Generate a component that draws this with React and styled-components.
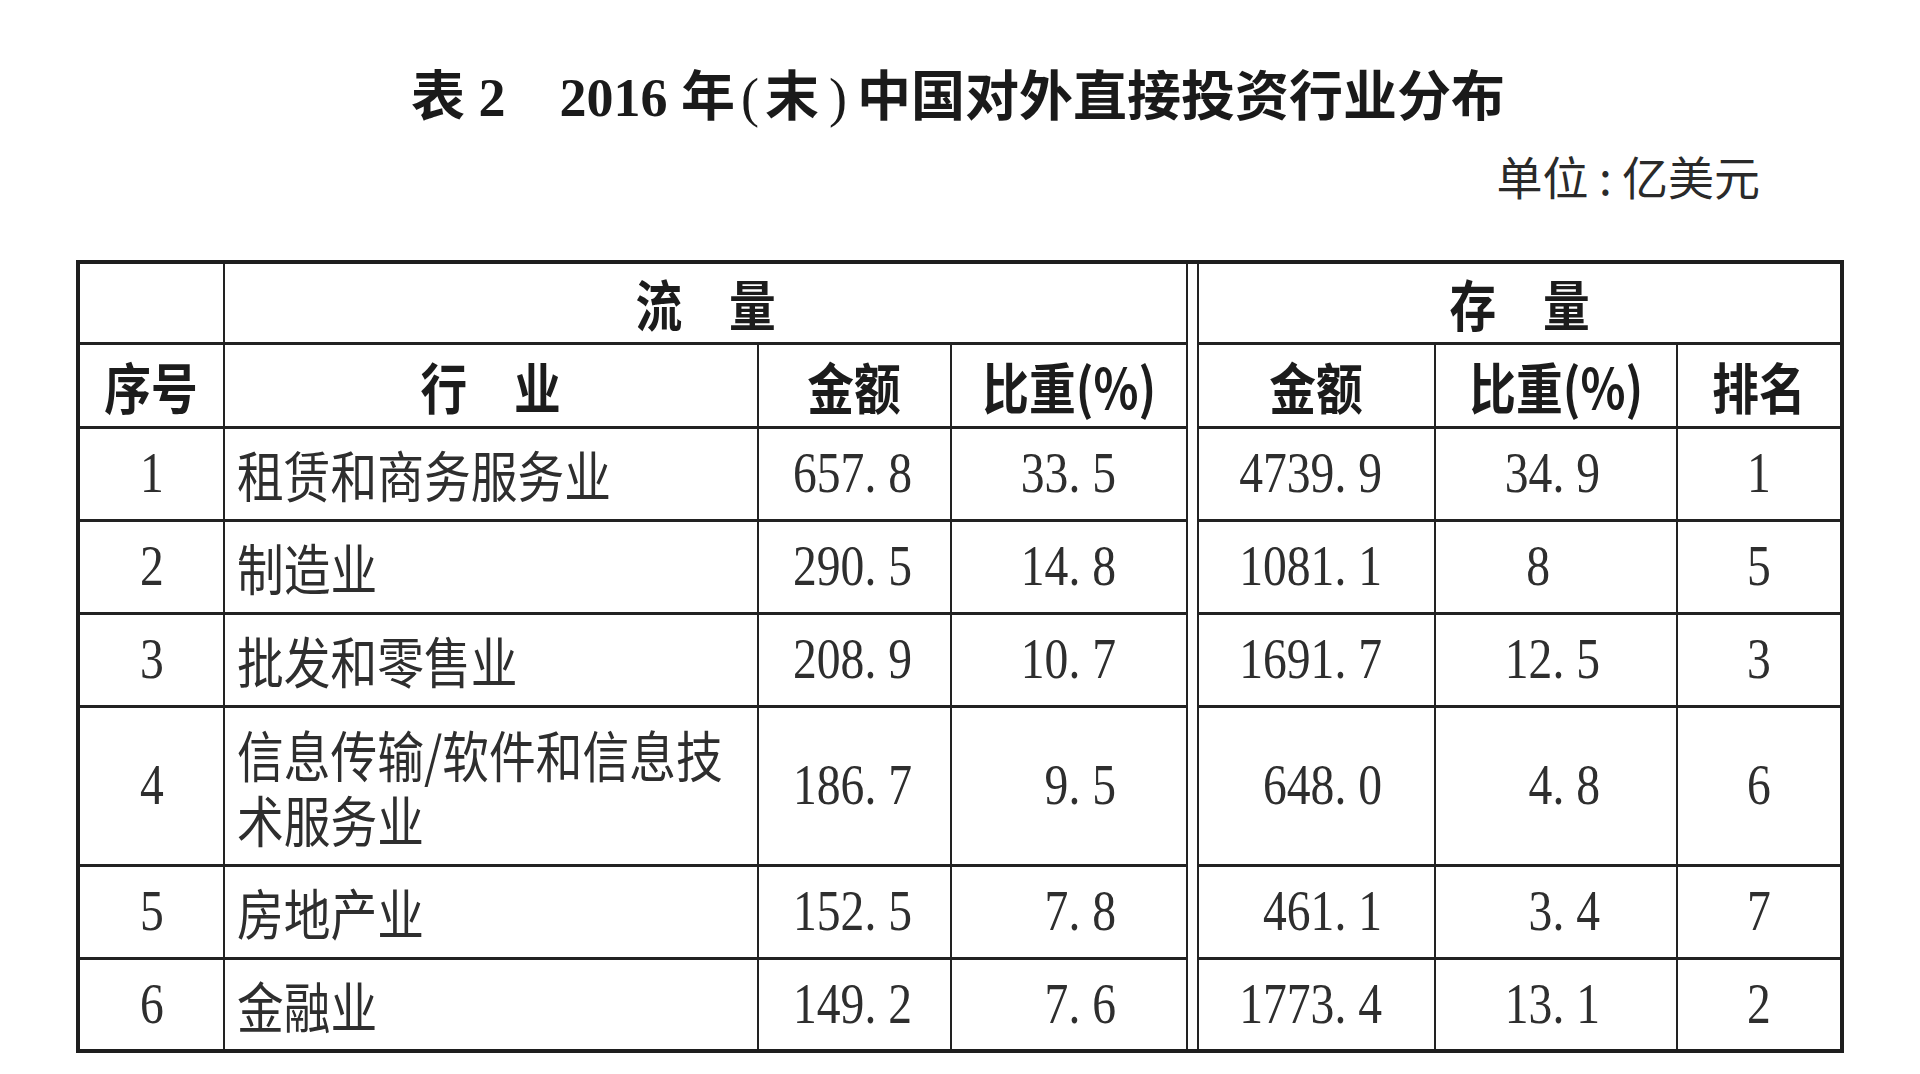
import React from 'react';
import styled, { createGlobalStyle, css } from 'styled-components';

const GlobalStyle = createGlobalStyle`
  html, body { margin: 0; padding: 0; background: #fff; }
  body { font-family: "Noto Sans CJK SC", "Liberation Sans", sans-serif; color: #222; }
`;

// ---------------- layout ----------------
const Page = styled.div`
  width: 1920px;
  height: 1074px;
  box-sizing: border-box;
  padding: 0 80px 0 76px;
  display: flex;
  flex-direction: column;
  overflow: hidden;
`;

const Title = styled.h1`
  margin: 66px 0 0;
  text-align: center;
  font-family: "Liberation Serif", "Noto Sans CJK SC", serif;
  font-weight: 700;
  font-size: 54px;
  line-height: 64px;
  color: #1a1a1a;
  white-space: pre;
`;

const Paren = styled.span`
  font-weight: 400;
  margin: 0 ${p => p.$gap || 0}px;
`;

const Unit = styled.div`
  align-self: flex-end;
  margin: 20px 80px 0 0;
  font-size: 46px;
  line-height: 50px;
  color: #2a2a2a;
  white-space: pre;
`;

const Table = styled.table`
  margin-top: 60px;
  width: 100%;
  table-layout: fixed;
  border-collapse: collapse;
  border: 4px solid #1e1e1e;
`;

const Col = styled.col`
  width: ${p => p.$w}px;
`;

const Row = styled.tr`
  height: ${p => p.$h}px;
`;

const cellBase = css`
  border: solid #222;
  border-width: 3px 2px;
  padding: 0 ${p => p.$pr || 0}px 0 ${p => p.$pl || 0}px;
  text-align: ${p => p.$align || 'center'};
  vertical-align: middle;
  font-size: 55px;
  line-height: 65px;
  overflow: visible;
`;

const HeadCell = styled.th`
  ${cellBase}
  font-weight: 700;
  color: #1c1c1c;
`;

const Cell = styled.td`
  ${cellBase}
  font-weight: 400;
  color: #2e2e2e;
`;

const NumCell = styled(Cell)`
  font-family: "Liberation Serif", serif;
  font-size: 56px;
`;

// double rule between 流量 and 存量
const Gap = styled.td`
  padding: 0;
  border-left: 2px solid #222;
  border-right: 2px solid #222;
`;

// the scan is horizontally condensed, so text is squeezed
const Txt = styled.span`
  display: inline-block;
  white-space: pre;
  transform: scaleX(0.85);
  transform-origin: ${p => p.$origin || 'center'};
`;

// ---------------- data ----------------
const rows = [
  { no: '1', name: '租赁和商务服务业', fa: '657. 8', fs: '33. 5', sa: '4739. 9', ss: '34. 9', rank: '1' },
  { no: '2', name: '制造业', fa: '290. 5', fs: '14. 8', sa: '1081. 1', ss: '8', ssPad: 126, rank: '5' },
  { no: '3', name: '批发和零售业', fa: '208. 9', fs: '10. 7', sa: '1691. 7', ss: '12. 5', rank: '3' },
  { no: '4', name: '信息传输/软件和信息技\n术服务业', fa: '186. 7', fs: '9. 5', sa: '648. 0', ss: '4. 8', rank: '6', h: 159 },
  { no: '5', name: '房地产业', fa: '152. 5', fs: '7. 8', sa: '461. 1', ss: '3. 4', rank: '7' },
  { no: '6', name: '金融业', fa: '149. 2', fs: '7. 6', sa: '1773. 4', ss: '13. 1', rank: '2' },
];

const colWidths = [146, 534, 193, 236, 11, 237, 242, 165];

function Right({ pr, children }) {
  return (
    <NumCell $align="right" $pr={pr}>
      <Txt $origin="right">{children}</Txt>
    </NumCell>
  );
}

export default function App() {
  return (
    <Page>
      <GlobalStyle />
      <Title>
        {'表 2\u30002016 年'}
        <Paren $gap={6}>(</Paren>末<Paren $gap={10}>)</Paren>
        中国对外直接投资行业分布
      </Title>
      <Unit>单位 : 亿美元</Unit>

      <Table>
        <colgroup>
          {colWidths.map((w, i) => <Col key={i} $w={w} />)}
        </colgroup>
        <tbody>
          <Row $h={81}>
            <HeadCell />
            <HeadCell colSpan={3}><Txt>流　量</Txt></HeadCell>
            <Gap rowSpan={2 + rows.length} />
            <HeadCell colSpan={3}><Txt>存　量</Txt></HeadCell>
          </Row>
          <Row $h={84}>
            <HeadCell><Txt>序号</Txt></HeadCell>
            <HeadCell><Txt>行　业</Txt></HeadCell>
            <HeadCell><Txt>金额</Txt></HeadCell>
            <HeadCell><Txt>比重(%)</Txt></HeadCell>
            <HeadCell><Txt>金额</Txt></HeadCell>
            <HeadCell><Txt>比重(%)</Txt></HeadCell>
            <HeadCell><Txt>排名</Txt></HeadCell>
          </Row>
          {rows.map(r => (
            <Row key={r.no} $h={r.h || 93}>
              <NumCell><Txt>{r.no}</Txt></NumCell>
              <Cell $align="left" $pl={12}><Txt $origin="left">{r.name}</Txt></Cell>
              <Right pr={38}>{r.fa}</Right>
              <Right pr={70}>{r.fs}</Right>
              <Right pr={52}>{r.sa}</Right>
              <Right pr={r.ssPad || 76}>{r.ss}</Right>
              <NumCell><Txt>{r.rank}</Txt></NumCell>
            </Row>
          ))}
        </tbody>
      </Table>
    </Page>
  );
}
